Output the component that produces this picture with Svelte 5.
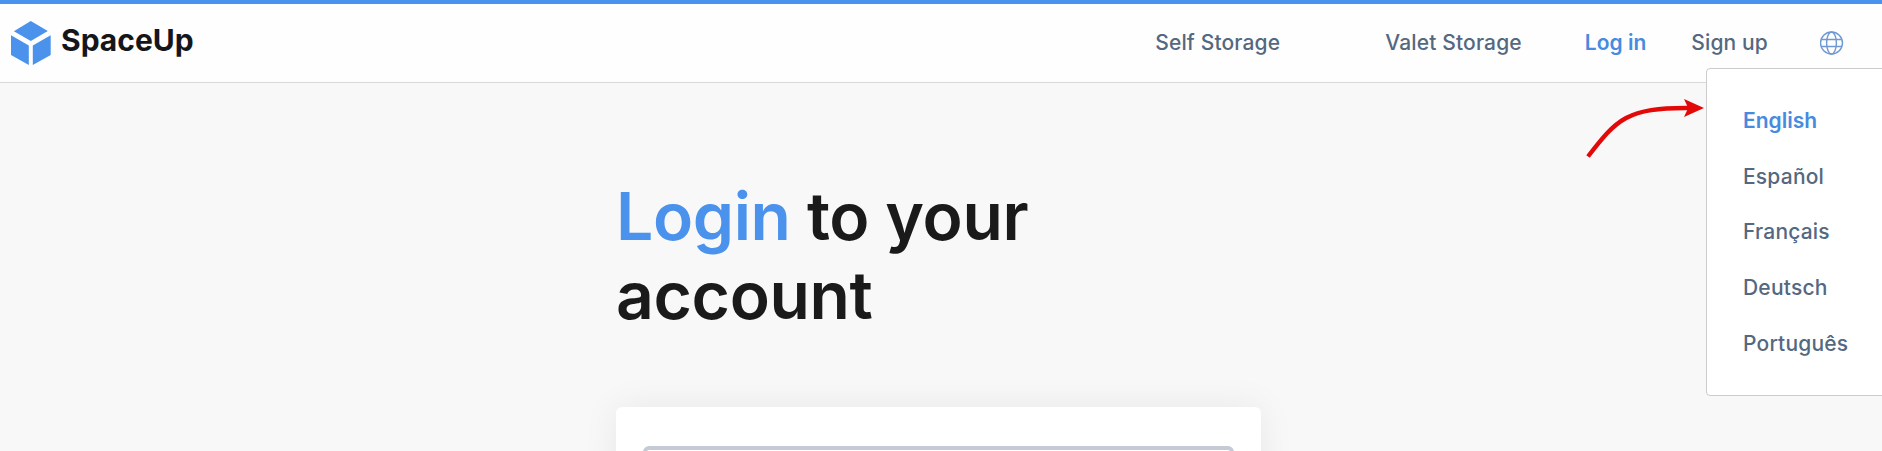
<script lang="ts">
	const links = [
		{ id: 'self', label: 'Self Storage' },
		{ id: 'valet', label: 'Valet Storage' },
		{ id: 'login', label: 'Log in', active: true },
		{ id: 'signup', label: 'Sign up' }
	];

	const languages = [
		{ code: 'en', name: 'English' },
		{ code: 'es', name: 'Español' },
		{ code: 'fr', name: 'Français' },
		{ code: 'de', name: 'Deutsch' },
		{ code: 'pt', name: 'Português' }
	];

	let current = $state('en');
	let menuOpen = $state(true);
</script>

<div class="page">
	<header class="topbar">
		<a class="brand" href="#home">
			<svg class="logo" width="40" height="44" viewBox="0 0 40 44" aria-hidden="true">
				<path d="M19.8 0 36.8 9.9 19.8 20.1 2.9 10.3z" />
				<path d="M0 14.2 17.8 24.4V44L0 34z" />
				<path d="M39.7 14.2 21.8 24.4V44l17.9-10z" />
			</svg>
			<span>SpaceUp</span>
		</a>

		<nav class="nav">
			{#each links as link (link.id)}
				<a class="link {link.id}" class:active={link.active} href="#{link.id}">{link.label}</a>
			{/each}
			<div class="lang">
				<button type="button" aria-label="Language" onclick={() => (menuOpen = !menuOpen)}>
					<svg width="24" height="24" viewBox="0 0 24 24" aria-hidden="true">
						<circle cx="11.5" cy="12" r="11" />
						<ellipse cx="11.5" cy="12" rx="4.9" ry="11" />
						<path d="M1.2 8.5h20.6M1.2 15.5h20.6" />
					</svg>
				</button>
			</div>
		</nav>
	</header>

	{#if menuOpen}
		<div class="menu">
			{#each languages as lang (lang.code)}
				<button type="button" class:active={lang.code === current} onclick={() => (current = lang.code)}>
					{lang.name}
				</button>
			{/each}
		</div>
		<svg class="arrow" width="120" height="62" viewBox="0 0 120 62" aria-hidden="true">
			<path class="shaft" d="M3 58.5C32 21 42 9.5 104 10" />
			<path class="tip" d="M119 10 99 1l4.2 9L99 19z" />
		</svg>
	{/if}

	<main class="content">
		<h1><span>Login</span> to your account</h1>
		<form class="card">
			<input type="email" aria-label="Email" />
		</form>
	</main>
</div>

<style>
	:global(body) {
		background: #f8f8f8;
		overflow: hidden;
	}
	.page {
		position: relative;
		height: 451px;
		overflow: hidden;
		font-family: Inter, 'Liberation Sans', sans-serif;
		color: #1a1a1a;
	}
	.topbar {
		display: flex;
		justify-content: space-between;
		box-sizing: border-box;
		height: 83px;
		padding: 0 38px 0 11px;
		background: #fefefe;
		border-top: 4px solid #4a92ec;
		border-bottom: 1px solid #d9d9d9;
	}
	a {
		text-decoration: none;
	}
	.brand {
		display: flex;
		align-items: flex-start;
		gap: 10px;
		padding-top: 17px;
		color: #15161a;
		font-size: 30px;
		font-weight: 700;
		line-height: 38px;
	}
	.logo {
		fill: #4a92ec;
	}
	.nav {
		display: flex;
		align-items: center;
		color: #54687f;
		font-size: 21px;
		font-weight: 500;
		letter-spacing: 0.15px;
	}
	.link {
		padding-bottom: 1px;
		color: inherit;
	}
	.self {
		margin-right: 105px;
	}
	.valet {
		margin-right: 63px;
	}
	.login {
		margin-right: 45px;
	}
	.signup {
		margin-right: 52px;
	}
	.nav .active,
	.menu .active {
		color: #478be0;
		font-weight: 600;
		letter-spacing: 0;
	}
	button {
		padding: 0;
		border: 0;
		background: none;
		color: inherit;
		font: inherit;
		letter-spacing: inherit;
		text-align: left;
		cursor: pointer;
	}
	.lang button {
		display: block;
	}
	.lang svg {
		display: block;
		fill: none;
		stroke: #6f99d0;
		stroke-width: 1.4;
	}
	.menu {
		position: absolute;
		z-index: 2;
		top: 68px;
		left: 1706px;
		right: -8px;
		display: flex;
		flex-direction: column;
		box-sizing: border-box;
		height: 328px;
		padding: 24px 36px;
		background: #fff;
		border: 1px solid #ccc;
		border-radius: 4px;
		color: #54687f;
		font-size: 21px;
		font-weight: 500;
		letter-spacing: 0.2px;
	}
	.menu button {
		height: 55.6px;
	}
	.arrow {
		position: absolute;
		z-index: 3;
		top: 98px;
		left: 1585px;
	}
	.shaft {
		fill: none;
		stroke: #e30909;
		stroke-width: 4.4;
	}
	.tip {
		fill: #e30909;
	}
	.content {
		width: 645px;
		margin-left: 616px;
		padding-top: 94px;
	}
	h1 {
		width: 500px;
		margin: 0;
		font-size: 66px;
		font-weight: 600;
		line-height: 79px;
		letter-spacing: -0.36px;
	}
	h1 span {
		color: #4a92ec;
	}
	.card {
		box-sizing: border-box;
		height: 400px;
		margin-top: 72px;
		padding: 39px 27px;
		background: #fff;
		border-radius: 6px;
		box-shadow: 0 0 36px rgba(0, 0, 0, 0.07);
	}
	input {
		display: block;
		box-sizing: border-box;
		width: 100%;
		height: 76px;
		border: 4px solid #c5cbd5;
		border-radius: 6px;
		background: #fff;
		font: inherit;
	}
</style>
